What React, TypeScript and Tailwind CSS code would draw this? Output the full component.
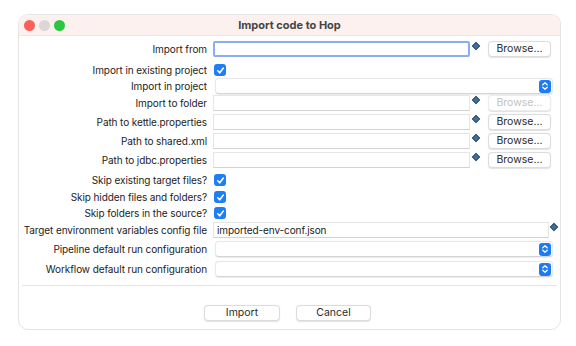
import React from "react";

const font = { fontFamily: "Inter, 'Noto Sans', sans-serif" };

function Diamond() {
  return (
    <div className="w-[6px] h-[6px] rotate-45 bg-[#466f93] border border-[#2f5475]" />
  );
}

function Browse({ disabled = false }: { disabled?: boolean }) {
  return (
    <div
      className={
        "w-[63px] h-[16px] rounded-[4px] bg-white border flex items-center justify-center text-[10.5px] shadow-[0_0.5px_1px_rgba(0,0,0,0.12)] " +
        (disabled ? "border-[#ececec] text-[#c2c2c2]" : "border-[#dcdcdc] text-[#2a2a2a]")
      }
    >
      Browse...
    </div>
  );
}

function TextInput({ focused = false, value = "", width = "w-[257px]" }: { focused?: boolean; value?: string; width?: string }) {
  return (
    <div
      className={
        width +
        " h-[16px] bg-white flex items-center px-[3px] text-[10px] tracking-[-0.1px] text-[#1a1a1a] " +
        (focused
          ? "border-[2px] border-[#8aaef2] rounded-[2px]"
          : "border border-[#e6e6e6] border-b-[#d2d2d2]")
      }
    >
      {value}
    </div>
  );
}

function Stepper() {
  return (
    <div className="w-[12px] h-[13px] rounded-[3px] bg-[#1d7cf5] flex items-center justify-center">
      <svg width="8" height="10" viewBox="0 0 8 10" fill="none" stroke="white" strokeWidth="1.3" strokeLinecap="round" strokeLinejoin="round">
        <path d="M1.8 3.8 L4 1.8 L6.2 3.8" />
        <path d="M1.8 6.2 L4 8.2 L6.2 6.2" />
      </svg>
    </div>
  );
}

function Combo() {
  return (
    <div className="ml-[8px] w-[338px] h-[16px] bg-white rounded-[4px] border border-[#e8e8e8] border-b-[#d4d4d4] shadow-[0_0.5px_1px_rgba(0,0,0,0.08)] flex items-center justify-end pr-[1px]">
      <Stepper />
    </div>
  );
}

function Check() {
  return (
    <div className="ml-[8px] w-[12px] h-[12px] rounded-[3px] bg-[#1f7df6] flex items-center justify-center">
      <svg width="9" height="9" viewBox="0 0 9 9" fill="none" stroke="white" strokeWidth="1.6" strokeLinecap="round" strokeLinejoin="round">
        <path d="M1.8 4.8 L3.7 6.8 L7.2 2.2" />
      </svg>
    </div>
  );
}

function Label({ children }: { children: React.ReactNode }) {
  return (
    <div className="w-[188px] text-right text-[10px] tracking-[-0.1px] leading-[14px] text-[#1c1c1c] whitespace-nowrap">{children}</div>
  );
}

function Row({ mt, children }: { mt: string; children: React.ReactNode }) {
  return <div className={"flex items-center h-[16px] " + mt}>{children}</div>;
}

function FileRow({ label, mt, focused = false, disabled = false }: { label: string; mt: string; focused?: boolean; disabled?: boolean }) {
  return (
    <Row mt={mt}>
      <Label>{label}</Label>
      <div className="ml-[6px] flex items-start h-[16px]">
        <TextInput focused={focused} />
        <div className="w-[18px] h-[16px] pl-[3px] pt-[2px]">
          <Diamond />
        </div>
        <Browse disabled={disabled} />
      </div>
    </Row>
  );
}

export default function App() {
  return (
    <div className="w-[576px] h-[346px] bg-white pt-[14px] pl-[18px]" style={font}>
      <div className="w-[543px] h-[316px] rounded-[10px] border border-[#e6e3e2] bg-white overflow-hidden flex flex-col">
        <div className="h-[21px] bg-[#fcf1ee] border-b border-[#efe6e3] flex items-center relative shrink-0">
          <div className="flex items-center gap-[4px] pl-[5px]">
            <div className="w-[11px] h-[11px] rounded-full bg-[#fe5f57]" />
            <div className="w-[11px] h-[11px] rounded-full bg-[#dcd6d5]" />
            <div className="w-[11px] h-[11px] rounded-full bg-[#28c840]" />
          </div>
          <div className="absolute inset-0 flex items-center justify-center text-[11px] font-bold text-[#444]">
            Import code to Hop
          </div>
        </div>

        <div className="flex flex-col">
          <FileRow label="Import from" mt="mt-[5px]" focused />
          <Row mt="mt-[5px]">
            <Label>Import in existing project</Label>
            <div className="ml-[-1px]"><Check /></div>
          </Row>
          <Row mt="mt-[0px]">
            <Label>Import in project</Label>
            <Combo />
          </Row>
          <FileRow label="Import to folder" mt="mt-[1px]" disabled />
          <FileRow label="Path to kettle.properties" mt="mt-[3px]" />
          <FileRow label="Path to shared.xml" mt="mt-[3px]" />
          <FileRow label="Path to jdbc.properties" mt="mt-[3px]" />
          <Row mt="mt-[4px]">
            <Label>Skip existing target files?</Label>
            <div className="ml-[-1px]"><Check /></div>
          </Row>
          <Row mt="mt-[1px]">
            <Label>Skip hidden files and folders?</Label>
            <div className="ml-[-1px]"><Check /></div>
          </Row>
          <Row mt="mt-[0px]">
            <Label>Skip folders in the source?</Label>
            <div className="ml-[-1px]"><Check /></div>
          </Row>
          <Row mt="mt-[1px]">
            <Label>Target environment variables config file</Label>
            <div className="ml-[6px] flex items-start h-[16px]">
              <TextInput width="w-[336px]" value="imported-env-conf.json" />
              <div className="pl-[2px] pt-[2px]">
                <Diamond />
              </div>
            </div>
          </Row>
          <Row mt="mt-[3px]">
            <Label>Pipeline default run configuration</Label>
            <Combo />
          </Row>
          <Row mt="mt-[4px]">
            <Label>Workflow default run configuration</Label>
            <Combo />
          </Row>
        </div>

        <div className="mt-[8px] mx-[3px] h-px bg-[#e6e6e6]" />

        <div className="mt-[19px] flex justify-center gap-[16px] pr-[4px]">
          <div className="w-[76px] h-[16px] rounded-[4px] bg-white border border-[#dcdcdc] shadow-[0_0.5px_1px_rgba(0,0,0,0.12)] flex items-center justify-center text-[10.5px] text-[#2a2a2a]">
            Import
          </div>
          <div className="w-[75px] h-[16px] rounded-[4px] bg-white border border-[#dcdcdc] shadow-[0_0.5px_1px_rgba(0,0,0,0.12)] flex items-center justify-center text-[10.5px] text-[#2a2a2a]">
            Cancel
          </div>
        </div>
      </div>
    </div>
  );
}
